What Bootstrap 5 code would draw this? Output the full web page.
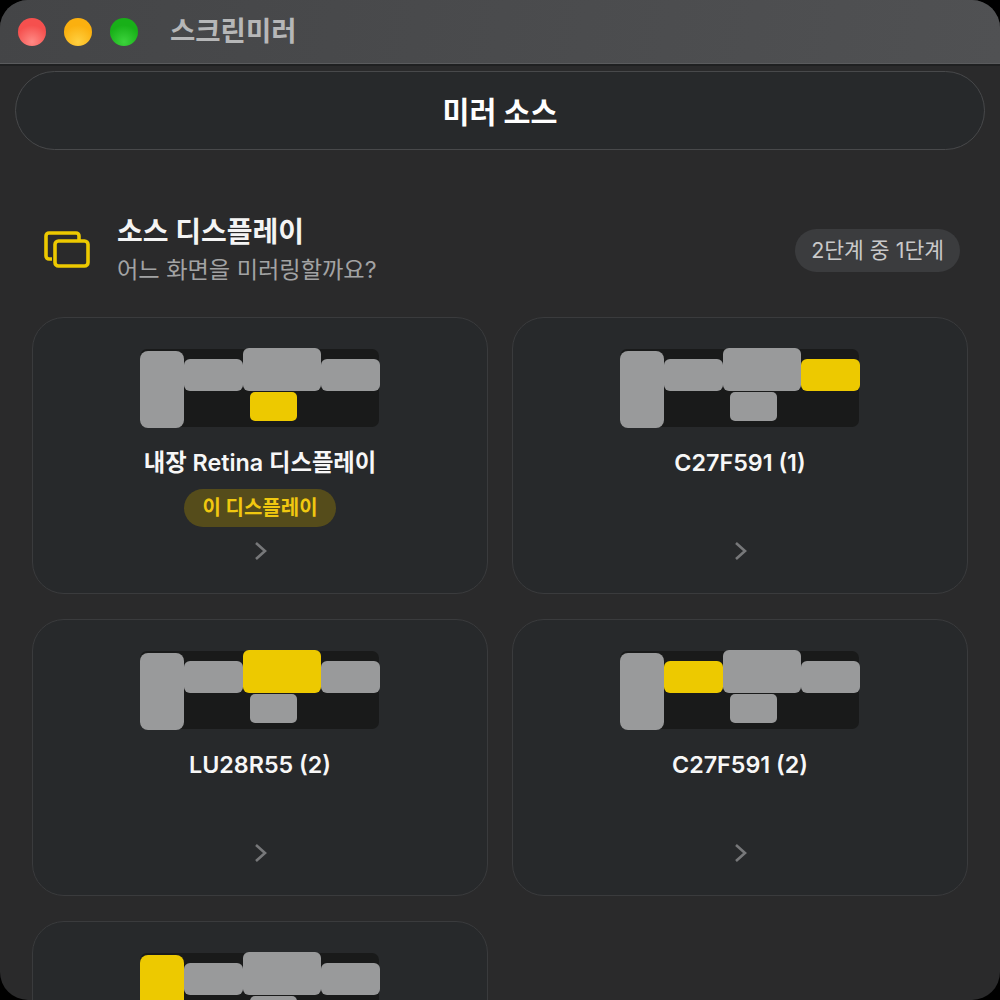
<!DOCTYPE html>
<html lang="ko">
<head>
<meta charset="utf-8">
<title>스크린미러</title>
<link href="https://cdn.jsdelivr.net/npm/bootstrap@5.3.0/dist/css/bootstrap.min.css" rel="stylesheet">
<style>
html,body{height:100%;margin:0;background:#000;overflow:hidden}
body{font-family:Inter,"Noto Sans CJK KR",sans-serif}
.app-win{width:1000px;height:1000px;background:#2a2a2b;border-radius:28px;overflow:hidden}
.app-bar{height:64px;background:linear-gradient(100deg,#444547,#505153);padding-left:18px;gap:18px;border-bottom:1px solid #5a5b5d;box-shadow:0 2px 0 #1f2021}
.tl{width:28px;height:28px;border-radius:50%}
.tl-r{background:radial-gradient(circle at 50% 85%,#ff8a85,#f5504e 60%)}
.tl-y{background:radial-gradient(circle at 50% 85%,#ffd040,#fbb00f 60%)}
.tl-g{background:radial-gradient(circle at 50% 85%,#3cd33c,#18b018 60%)}
.app-title{font-size:27.5px;font-weight:700;color:#b6b7b8;margin-left:14px;line-height:1}
.head-pill{margin:7px 15px 0;height:79px;padding-top:4px;border:1.5px solid #48494b;border-radius:40px;background:#27292b;color:#fff;font-size:29.3px;font-weight:700}
.sec-head{padding:0 40px 0 44px;margin-top:65px;height:70px}
.sec-icon{width:46px;height:40px;margin-right:27px;flex:none}
.sec-title{font-size:28px;font-weight:700;color:#f4f4f4;line-height:34px}
.sec-sub{font-size:23.2px;color:#a2a3a4;line-height:30px;margin-top:6px}
.step-pill{height:43px;padding:0 16px;background:#3b3c3e;color:#c9c9ca;font-size:21.5px;border-radius:22px}
.cards-wrap{padding:0 32px;margin-top:32px}
.disp-card{height:277px;margin-bottom:1px;background:#27292b;border:1px solid #3a3b3d;border-radius:32px;padding-top:30px}
.mini-map{width:240px;height:82px;display:block}
.mm-bg{fill:#191a1a}
.mm-o{fill:#999a9b}
.mm-y{fill:#edc900}
.disp-name{font-weight:600;color:#f7f7f7;line-height:28px;margin-top:19px;font-size:23.3px}
.this-tag{height:38px;padding:0 18px;margin-top:12px;background:#554c1b;color:#f0c810;font-size:20px;font-weight:700;border-radius:19px}
.chev{display:block;width:14px;height:20px;margin-left:2px}
.chev-slot{position:absolute;left:0;right:0;bottom:32px}
</style>
</head>
<body>
<div class="app-win">
  <div class="app-bar d-flex align-items-center">
    <span class="tl tl-r"></span><span class="tl tl-y"></span><span class="tl tl-g"></span>
    <span class="app-title">스크린미러</span>
  </div>
  <div class="head-pill d-flex align-items-center justify-content-center">미러 소스</div>
  <div class="sec-head d-flex align-items-center">
    <svg class="sec-icon" viewBox="0 0 46 40" fill="none" stroke="#edc900" stroke-width="3.6"><path d="M8 29H5a3 3 0 0 1-3-3V6a3 3 0 0 1 3-3h27a3 3 0 0 1 3 3v4"/><rect x="11" y="11" width="33" height="25" rx="3.5"/></svg>
    <div class="flex-grow-1">
      <div class="sec-title">소스 디스플레이</div>
      <div class="sec-sub">어느 화면을 미러링할까요?</div>
    </div>
    <div class="step-pill d-flex align-items-center">2단계 중 1단계</div>
  </div>
  <div class="cards-wrap">
    <div class="row g-4">
      <div class="col-6"><div class="disp-card position-relative d-flex flex-column align-items-center">
        <svg class="mini-map" viewBox="0 0 240 82"><rect class="mm-bg" y="1" width="239" height="78" rx="7"/><rect class="mm-o" y="3" width="44" height="77" rx="8"/><rect class="mm-o" x="44" y="11" width="59" height="32" rx="6"/><rect class="mm-o" x="103" y="0" width="78" height="43" rx="6"/><rect class="mm-o" x="181" y="11" width="59" height="32" rx="6"/><rect class="mm-y" x="110" y="44" width="47" height="29" rx="5"/></svg>
        <div class="disp-name">내장 Retina 디스플레이</div>
        <div class="this-tag d-flex align-items-center">이 디스플레이</div>
        <div class="chev-slot d-flex justify-content-center"><svg class="chev" viewBox="0 0 14 20" fill="none" stroke="#77787a" stroke-width="2.6"><path d="M2 2l9 8-9 8"/></svg></div>
      </div></div>
      <div class="col-6"><div class="disp-card position-relative d-flex flex-column align-items-center">
        <svg class="mini-map" viewBox="0 0 240 82"><rect class="mm-bg" y="1" width="239" height="78" rx="7"/><rect class="mm-o" y="3" width="44" height="77" rx="8"/><rect class="mm-o" x="44" y="11" width="59" height="32" rx="6"/><rect class="mm-o" x="103" y="0" width="78" height="43" rx="6"/><rect class="mm-y" x="181" y="11" width="59" height="32" rx="6"/><rect class="mm-o" x="110" y="44" width="47" height="29" rx="5"/></svg>
        <div class="disp-name">C27F591 (1)</div>
        <div class="chev-slot d-flex justify-content-center"><svg class="chev" viewBox="0 0 14 20" fill="none" stroke="#77787a" stroke-width="2.6"><path d="M2 2l9 8-9 8"/></svg></div>
      </div></div>
      <div class="col-6"><div class="disp-card position-relative d-flex flex-column align-items-center">
        <svg class="mini-map" viewBox="0 0 240 82"><rect class="mm-bg" y="1" width="239" height="78" rx="7"/><rect class="mm-o" y="3" width="44" height="77" rx="8"/><rect class="mm-o" x="44" y="11" width="59" height="32" rx="6"/><rect class="mm-y" x="103" y="0" width="78" height="43" rx="6"/><rect class="mm-o" x="181" y="11" width="59" height="32" rx="6"/><rect class="mm-o" x="110" y="44" width="47" height="29" rx="5"/></svg>
        <div class="disp-name">LU28R55 (2)</div>
        <div class="chev-slot d-flex justify-content-center"><svg class="chev" viewBox="0 0 14 20" fill="none" stroke="#77787a" stroke-width="2.6"><path d="M2 2l9 8-9 8"/></svg></div>
      </div></div>
      <div class="col-6"><div class="disp-card position-relative d-flex flex-column align-items-center">
        <svg class="mini-map" viewBox="0 0 240 82"><rect class="mm-bg" y="1" width="239" height="78" rx="7"/><rect class="mm-o" y="3" width="44" height="77" rx="8"/><rect class="mm-y" x="44" y="11" width="59" height="32" rx="6"/><rect class="mm-o" x="103" y="0" width="78" height="43" rx="6"/><rect class="mm-o" x="181" y="11" width="59" height="32" rx="6"/><rect class="mm-o" x="110" y="44" width="47" height="29" rx="5"/></svg>
        <div class="disp-name">C27F591 (2)</div>
        <div class="chev-slot d-flex justify-content-center"><svg class="chev" viewBox="0 0 14 20" fill="none" stroke="#77787a" stroke-width="2.6"><path d="M2 2l9 8-9 8"/></svg></div>
      </div></div>
      <div class="col-6"><div class="disp-card position-relative d-flex flex-column align-items-center">
        <svg class="mini-map" viewBox="0 0 240 82"><rect class="mm-bg" y="1" width="239" height="78" rx="7"/><rect class="mm-y" y="3" width="44" height="77" rx="8"/><rect class="mm-o" x="44" y="11" width="59" height="32" rx="6"/><rect class="mm-o" x="103" y="0" width="78" height="43" rx="6"/><rect class="mm-o" x="181" y="11" width="59" height="32" rx="6"/><rect class="mm-o" x="110" y="44" width="47" height="29" rx="5"/></svg>
      </div></div>
    </div>
  </div>
</div>
<script src="https://cdn.jsdelivr.net/npm/bootstrap@5.3.0/dist/js/bootstrap.bundle.min.js"></script>
</body>
</html>
